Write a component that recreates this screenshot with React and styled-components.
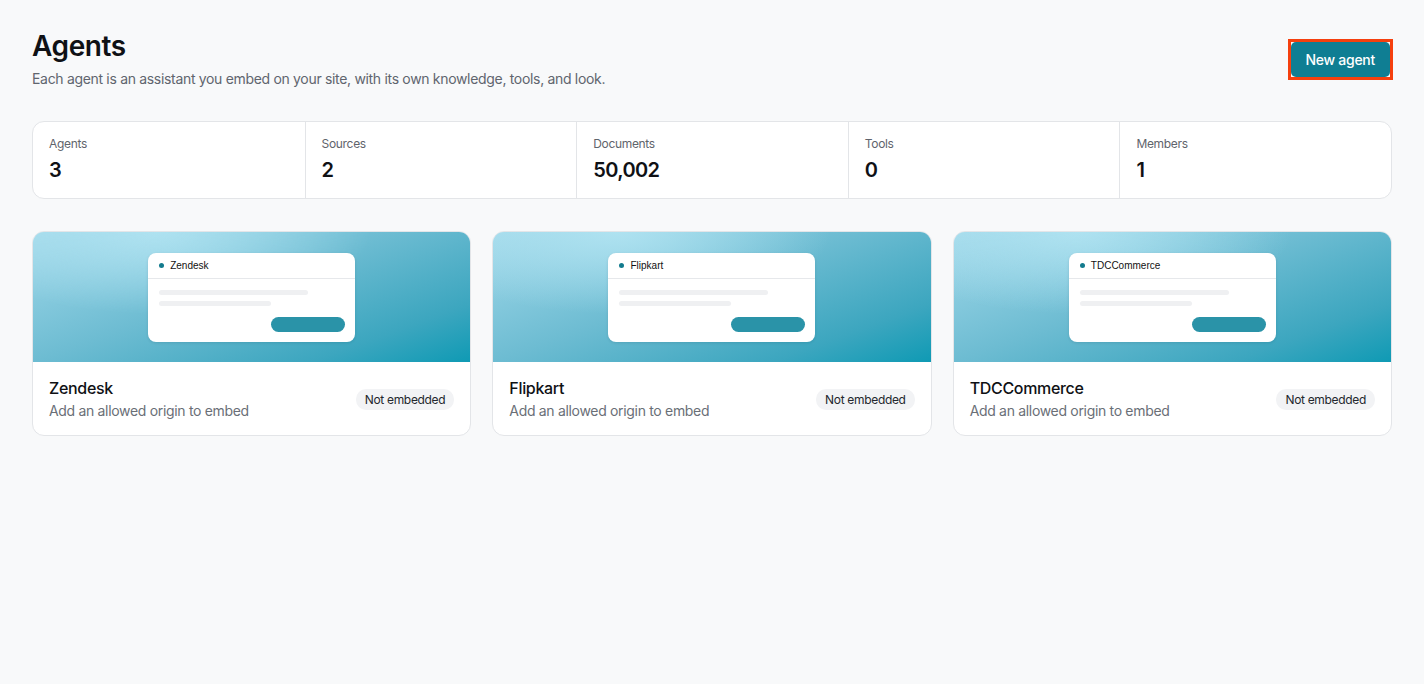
import React from "react";
import styled, { createGlobalStyle } from "styled-components";

const GlobalStyle = createGlobalStyle`
  html, body {
    margin: 0;
    padding: 0;
    background: #f8f9fa;
  }
  body {
    font-family: Inter, "Noto Sans", sans-serif;
    letter-spacing: -0.02em;
    color: #111418;
    -webkit-font-smoothing: antialiased;
  }
  * { box-sizing: border-box; }
`;

const Page = styled.main`
  padding: 29px 32px 32px 32px;
  min-height: 684px;
`;

const Header = styled.header`
  display: flex;
  justify-content: space-between;
  align-items: flex-start;
`;

const TitleBlock = styled.div`
  display: flex;
  flex-direction: column;
  gap: 6px;
`;

const Title = styled.h1`
  margin: 0;
  font-size: 28px;
  line-height: 34px;
  font-weight: 600;
  letter-spacing: -0.4px;
  color: #0f1115;
`;

const Subtitle = styled.p`
  margin: 0;
  font-size: 14px;
  line-height: 20px;
  color: #60656e;
`;

const FocusRing = styled.span`
  display: inline-flex;
  margin-top: 13px;
  margin-right: 2px;
  outline: 3px solid #f5400e;
`;

const PrimaryButton = styled.button`
  height: 35px;
  padding: 0 15px;
  border: none;
  border-radius: 5px;
  background: #0f7e93;
  color: #ffffff;
  font-family: inherit;
  font-size: 14px;
  font-weight: 500;
  letter-spacing: -0.02em;
  cursor: pointer;
`;

const Stats = styled.section`
  margin-top: 32px;
  display: grid;
  grid-template-columns: repeat(5, 1fr);
  background: #ffffff;
  border: 1px solid #e3e5e8;
  border-radius: 12px;
  overflow: hidden;
`;

const Stat = styled.div`
  padding: 14px 16px 15px 16px;
  display: flex;
  flex-direction: column;
  gap: 5px;
  & + & {
    border-left: 1px solid #e3e5e8;
  }
`;

const StatLabel = styled.span`
  font-size: 12px;
  line-height: 16px;
  color: #5f646c;
`;

const StatValue = styled.span`
  font-size: 20px;
  line-height: 26px;
  font-weight: 600;
  letter-spacing: -0.03em;
  color: #0f1115;
`;

const CardGrid = styled.section`
  margin-top: 32px;
  display: grid;
  grid-template-columns: repeat(3, 1fr);
  gap: 21px;
`;

const Card = styled.article`
  background: #ffffff;
  border: 1px solid #e3e5e8;
  border-radius: 12px;
  overflow: hidden;
`;

const Banner = styled.div`
  height: 130px;
  display: flex;
  align-items: center;
  justify-content: center;
  background:
    radial-gradient(ellipse 70% 90% at 28% 0%, rgba(178, 228, 242, 0.9) 0%, rgba(178, 228, 242, 0) 70%),
    linear-gradient(160deg, #a2d9ea 0%, #6dbcd2 45%, #3ca6bf 80%, #0f9ab4 100%);
`;

const Preview = styled.div`
  width: 207px;
  height: 89px;
  background: #ffffff;
  border-radius: 8px;
  box-shadow: 0 1px 3px rgba(0, 40, 60, 0.12);
  display: flex;
  flex-direction: column;
`;

const PreviewHeader = styled.div`
  height: 28px;
  display: flex;
  align-items: center;
  gap: 6px;
  padding: 0 11px;
  border-bottom: 1px solid #e6e8eb;
  font-family: "Liberation Sans", Arial, sans-serif;
  font-size: 10px;
  letter-spacing: 0;
  color: #111;
`;

const Dot = styled.span`
  width: 5px;
  height: 5px;
  border-radius: 50%;
  background: #137b8e;
`;

const PreviewBody = styled.div`
  flex: 1;
  padding: 11px 10px 10px 11px;
  display: flex;
  flex-direction: column;
  gap: 6px;
`;

const SkeletonLine = styled.div`
  height: 5px;
  width: ${(p) => p.$w}px;
  border-radius: 3px;
  background: #eff0f2;
`;

const PreviewButton = styled.div`
  align-self: flex-end;
  margin-top: 5px;
  width: 74px;
  height: 15px;
  border-radius: 8px;
  background: #2a93a8;
`;

const CardBody = styled.div`
  display: flex;
  justify-content: space-between;
  align-items: center;
  padding: 16px 16px 14px 16px;
`;

const CardText = styled.div`
  display: flex;
  flex-direction: column;
  gap: 3px;
`;

const CardName = styled.h3`
  margin: 0;
  font-size: 16px;
  line-height: 20px;
  font-weight: 500;
  color: #0f1115;
`;

const CardHint = styled.span`
  font-size: 14px;
  line-height: 20px;
  color: #6a6f77;
`;

const Badge = styled.span`
  padding: 3px 9px 2px 9px;
  border-radius: 10px;
  background: #f2f3f5;
  font-size: 12px;
  line-height: 16px;
  color: #23272d;
`;

const stats = [
  { label: "Agents", value: "3" },
  { label: "Sources", value: "2" },
  { label: "Documents", value: "50,002" },
  { label: "Tools", value: "0" },
  { label: "Members", value: "1" },
];

const agents = ["Zendesk", "Flipkart", "TDCCommerce"];

function AgentCard({ name }) {
  return (
    <Card>
      <Banner>
        <Preview>
          <PreviewHeader>
            <Dot />
            {name}
          </PreviewHeader>
          <PreviewBody>
            <SkeletonLine $w={149} />
            <SkeletonLine $w={112} />
            <PreviewButton />
          </PreviewBody>
        </Preview>
      </Banner>
      <CardBody>
        <CardText>
          <CardName>{name}</CardName>
          <CardHint>Add an allowed origin to embed</CardHint>
        </CardText>
        <Badge>Not embedded</Badge>
      </CardBody>
    </Card>
  );
}

export default function App() {
  return (
    <>
      <GlobalStyle />
      <Page>
        <Header>
          <TitleBlock>
            <Title>Agents</Title>
            <Subtitle>
              Each agent is an assistant you embed on your site, with its own knowledge, tools, and look.
            </Subtitle>
          </TitleBlock>
          <FocusRing>
            <PrimaryButton>New agent</PrimaryButton>
          </FocusRing>
        </Header>
        <Stats>
          {stats.map((s) => (
            <Stat key={s.label}>
              <StatLabel>{s.label}</StatLabel>
              <StatValue>{s.value}</StatValue>
            </Stat>
          ))}
        </Stats>
        <CardGrid>
          {agents.map((a) => (
            <AgentCard key={a} name={a} />
          ))}
        </CardGrid>
      </Page>
    </>
  );
}
